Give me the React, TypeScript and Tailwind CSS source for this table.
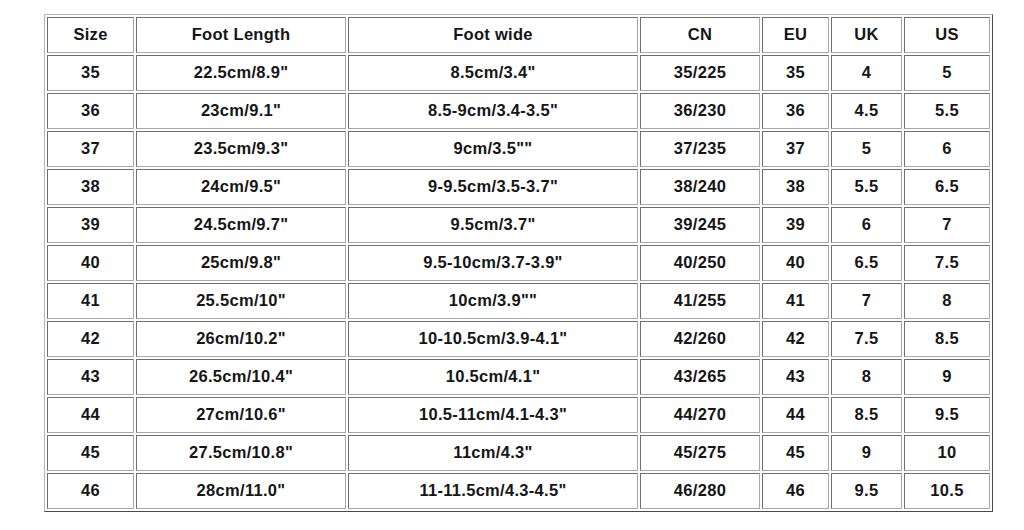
const headers = ["Size", "Foot Length", "Foot wide", "CN", "EU", "UK", "US"];

// cell widths incl. borders, in px
const colW = ["w-[87px]", "w-[210px]", "w-[290px]", "w-[120px]", "w-[67px]", "w-[71px]", "w-[86px]"];

const rows: string[][] = [
    ["35", "22.5cm/8.9\"", "8.5cm/3.4\"", "35/225", "35", "4", "5"],
    ["36", "23cm/9.1\"", "8.5-9cm/3.4-3.5\"", "36/230", "36", "4.5", "5.5"],
    ["37", "23.5cm/9.3\"", "9cm/3.5\"\"", "37/235", "37", "5", "6"],
    ["38", "24cm/9.5\"", "9-9.5cm/3.5-3.7\"", "38/240", "38", "5.5", "6.5"],
    ["39", "24.5cm/9.7\"", "9.5cm/3.7\"", "39/245", "39", "6", "7"],
    ["40", "25cm/9.8\"", "9.5-10cm/3.7-3.9\"", "40/250", "40", "6.5", "7.5"],
    ["41", "25.5cm/10\"", "10cm/3.9\"\"", "41/255", "41", "7", "8"],
    ["42", "26cm/10.2\"", "10-10.5cm/3.9-4.1\"", "42/260", "42", "7.5", "8.5"],
    ["43", "26.5cm/10.4\"", "10.5cm/4.1\"", "43/265", "43", "8", "9"],
    ["44", "27cm/10.6\"", "10.5-11cm/4.1-4.3\"", "44/270", "44", "8.5", "9.5"],
    ["45", "27.5cm/10.8\"", "11cm/4.3\"", "45/275", "45", "9", "10"],
    ["46", "28cm/11.0\"", "11-11.5cm/4.3-4.5\"", "46/280", "46", "9.5", "10.5"],
];

const cellCls =
    "box-border h-[36px] border border-solid border-t-[#6f6f6f] border-l-[#6f6f6f] border-r-[#a8a8a8] border-b-[#a8a8a8] p-0 pb-[2px] text-center align-middle";

export default function App() {
    return (
        <div className="h-[530px] w-[1024px] overflow-hidden bg-white pl-[44px] pt-[14px] font-['Liberation_Sans',Arial,sans-serif] text-[16.5px] font-bold tracking-[0.3px] text-[#161616]">
            <table className="table-fixed border-separate border-spacing-[2px] border border-solid border-t-[#b4b4b4] border-l-[#b4b4b4] border-r-[#4a4a4a] border-b-[#4a4a4a]">
                <thead>
                    <tr>
                        {headers.map((h, i) => (
                            <th key={h} className={`${cellCls} ${colW[i]} font-bold`}>
                                {h}
                            </th>
                        ))}
                    </tr>
                </thead>
                <tbody>
                    {rows.map((r) => (
                        <tr key={r[0]}>
                            {r.map((v, i) => (
                                <td key={i} className={`${cellCls} ${colW[i]}`}>
                                    {v}
                                </td>
                            ))}
                        </tr>
                    ))}
                </tbody>
            </table>
        </div>
    );
}
